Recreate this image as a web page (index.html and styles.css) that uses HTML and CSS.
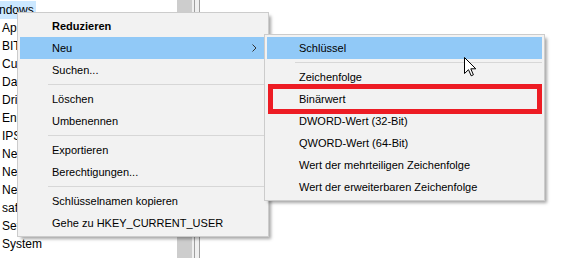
FILE: index.html
```html
<!DOCTYPE html>
<html lang="de">
<head>
  <meta charset="UTF-8">
  <title>Registrierungs-Editor – Neu</title>
  <link rel="stylesheet" href="styles.css">
</head>
<body>
  <div class="editor">
    <div class="tree">
      <div class="tree-row selected"><span class="shifted">Windows</span></div>
      <div class="tree-row covered">Appx</div>
      <div class="tree-row covered">BITS</div>
      <div class="tree-row covered">CurrentVersion</div>
      <div class="tree-row covered">DataCollection</div>
      <div class="tree-row covered">DriverSearching</div>
      <div class="tree-row covered">EnhancedStorageDevices</div>
      <div class="tree-row covered">IPSec</div>
      <div class="tree-row covered">Network Connections</div>
      <div class="tree-row covered">NetworkConnectivityStatus</div>
      <div class="tree-row covered">NetworkProvider</div>
      <div class="tree-row covered">safer</div>
      <div class="tree-row covered">SettingSync</div>
      <div class="tree-row">System</div>
    </div>
    <div class="scrollbar"><div class="thumb"></div></div>
    <div class="splitter"></div>
    <div class="values"></div>
  </div>

  <!-- context menu of the key -->
  <div class="menu main-menu">
    <div class="item bold">Reduzieren</div>
    <div class="item active">Neu
      <svg class="chevron" width="5" height="8" viewBox="0 0 5 8"><path d="M0.5 0.5 L4 4 L0.5 7.5" fill="none" stroke="#333" stroke-width="1"/></svg>
    </div>
    <div class="item">Suchen...</div>
    <div class="sep"></div>
    <div class="item">Löschen</div>
    <div class="item">Umbenennen</div>
    <div class="sep"></div>
    <div class="item">Exportieren</div>
    <div class="item">Berechtigungen...</div>
    <div class="sep"></div>
    <div class="item">Schlüsselnamen kopieren</div>
    <div class="item">Gehe zu HKEY_CURRENT_USER</div>
  </div>

  <!-- "Neu" submenu -->
  <div class="menu sub-menu">
    <div class="item active">Schlüssel</div>
    <div class="sep"></div>
    <div class="item">Zeichenfolge</div>
    <div class="item">Binärwert</div>
    <div class="item">DWORD-Wert (32-Bit)</div>
    <div class="item">QWORD-Wert (64-Bit)</div>
    <div class="item">Wert der mehrteiligen Zeichenfolge</div>
    <div class="item">Wert der erweiterbaren Zeichenfolge</div>
  </div>

  <div class="marker"></div>

  <svg class="cursor" width="13" height="20" viewBox="0 0 13 20">
    <path d="M0.5 0.5 L0.5 16.5 L4.5 12.7 L7.2 18.8 L9.4 17.8 L6.8 11.8 L11.8 11.8 Z" fill="#fff" stroke="#000" stroke-width="1" stroke-linejoin="miter"/>
  </svg>
</body>
</html>
```

FILE: styles.css
```css
:root {
  --menu-bg: #f2f2f2;
  --menu-border: #cccccc;
  --menu-hover: #91c9f7;
  --sep-color: #d7d7d7;
  --tree-select: #cce8ff;
  --marker-red: #ed1c24;
  --font-family: 'Liberation Sans', Arial, sans-serif;
}

html, body { margin: 0; padding: 0; }
body {
  width: 565px;
  height: 258px;
  overflow: hidden;
  position: relative;
  background: #fff;
  font-family: var(--font-family);
  font-size: 11px;
  color: #000;
}

.editor { display: flex; height: 258px; }

.tree { width: 177px; padding-top: 1px; overflow: hidden; white-space: nowrap; font-size: 12px; }
.tree-row { height: 18px; line-height: 18px; padding-left: 2px; }
.tree-row.covered { width: 16px; overflow: hidden; }
.tree-row.selected {
  width: 36px;
  padding-left: 0;
  background: var(--tree-select);
  overflow: hidden;
}
.shifted { margin-left: -15px; }

.scrollbar { width: 17px; background: #f0f0f0; }
.thumb { width: 15px; height: 100%; background: #cdcdcd; }

.splitter {
  width: 4px;
  border-left: 1px solid #a0a0a0;
  border-right: 1px solid #a0a0a0;
  background: #f0f0f0;
}

.values { flex: 1; background: #fff; }

/* menus */
.menu {
  position: absolute;
  background: var(--menu-bg);
  border: 1px solid var(--menu-border);
  padding: 2px;
  box-shadow: 3px 3px 3px -1px rgba(0, 0, 0, 0.35);
}
.main-menu { left: 17px; top: 12px; width: 246px; }
.sub-menu { left: 264px; top: 34px; width: 275px; }

.item {
  position: relative;
  height: 22px;
  line-height: 22px;
  padding-left: 32px;
  white-space: nowrap;
}
.item.bold { font-weight: bold; }
.item.active { background: var(--menu-hover); }

.chevron { position: absolute; right: 9px; top: 7px; }

.sep {
  height: 7px;
  position: relative;
}
.sep::after {
  content: '';
  position: absolute;
  left: 28px;
  right: 0;
  top: 3px;
  border-top: 1px solid var(--sep-color);
}

.marker {
  position: absolute;
  left: 268px;
  top: 84px;
  width: 264px;
  height: 20px;
  border: 5px solid var(--marker-red);
}

.cursor { position: absolute; left: 464px; top: 57px; }
```
